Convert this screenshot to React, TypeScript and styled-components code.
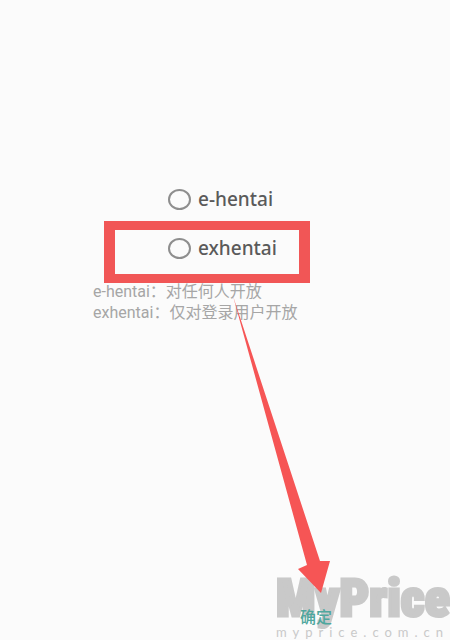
import { useState } from "react";
import styled, { createGlobalStyle } from "styled-components";

const GlobalStyle = createGlobalStyle`
  *, *::before, *::after { box-sizing: border-box; }
  body {
    margin: 0;
    background: #fbfbfb;
    font-family: "Noto Sans", "Noto Sans CJK SC", sans-serif;
  }
`;

const Page = styled.div`
  position: relative;
  display: flex;
  flex-direction: column;
  min-height: 100vh;
  overflow: hidden;
`;

const Main = styled.main`
  flex: 1;
  width: 264px;
  margin: 0 auto;
  padding-top: 184px;
`;

const Options = styled.fieldset`
  display: flex;
  flex-direction: column;
  gap: 19px;
  margin: 0;
  padding: 0 0 0 75px;
  border: 0;
`;

const Option = styled.label`
  display: flex;
  align-items: center;
  gap: 7px;
  position: relative;
  height: 30px;
  font-size: 19px;
  font-weight: 500;
  line-height: 30px;
  color: #5a5a5a;
  cursor: pointer;
`;

const Radio = styled.input`
  appearance: none;
  width: 23px;
  height: 21px;
  margin: 0;
  border: 2px solid #8e8e8e;
  border-radius: 50%;
  &:checked {
    background: radial-gradient(circle, #26a69a 5px, transparent 6px);
  }
`;

const Frame = styled.span`
  position: absolute;
  top: -12px;
  left: -64px;
  width: 206px;
  height: 62px;
  border: solid #f15656;
  border-width: 9px 11px;
  pointer-events: none;
`;

const Notes = styled.div`
  padding-top: 18px;
  font-family: Roboto, "Noto Sans CJK SC", sans-serif;
  font-size: 16px;
  line-height: 21px;
  color: #a6a6a6;
  white-space: nowrap;
`;

const Note = styled.p`
  margin: 0;
`;

const Footer = styled.footer`
  display: flex;
  justify-content: flex-end;
  padding: 0 118px 16px 0;
`;

const Confirm = styled.button`
  position: relative;
  z-index: 1;
  padding: 0;
  border: 0;
  background: none;
  font: 500 16px/16px "Noto Sans CJK SC", sans-serif;
  color: #4fa79e;
  cursor: pointer;
`;

const Watermark = styled.div`
  position: absolute;
  right: 0;
  bottom: 0;
  width: 174px;
  color: #c9c9c9;
  white-space: nowrap;
  pointer-events: none;
`;

const Brand = styled.div`
  font: 900 52px/50px "Roboto Condensed", "Liberation Sans", sans-serif;
  -webkit-text-stroke: 3px #c9c9c9;
`;

const Domain = styled.div`
  font: 13px/16px Lato, sans-serif;
  letter-spacing: 6px;
`;

const Arrow = styled.svg`
  position: absolute;
  right: 118px;
  bottom: 44px;
  width: 100px;
  height: 300px;
  pointer-events: none;
`;

const sites = ["e-hentai", "exhentai"];

export default function App() {
  const [site, setSite] = useState("");
  return (
    <Page>
      <GlobalStyle />
      <Main>
        <Options aria-label="site">
          {sites.map((name) => (
            <Option key={name}>
              <Radio
                type="radio"
                name="site"
                value={name}
                checked={site === name}
                onChange={() => setSite(name)}
              />
              {name}
              {name === "exhentai" && <Frame />}
            </Option>
          ))}
        </Options>
        <Notes>
          <Note>e-hentai：对任何人开放</Note>
          <Note>exhentai：仅对登录用户开放</Note>
        </Notes>
      </Main>
      <Footer>
        <Confirm type="button">确定</Confirm>
      </Footer>
      <Watermark>
        <Brand>MyPrice</Brand>
        <Domain>myprice.com.cn</Domain>
      </Watermark>
      <Arrow viewBox="0 0 100 300" aria-hidden="true">
        <path d="M1 0 L88 265 L98 265 L89 297 L66 273 L75 269 Z" fill="#f65555" />
      </Arrow>
    </Page>
  );
}
